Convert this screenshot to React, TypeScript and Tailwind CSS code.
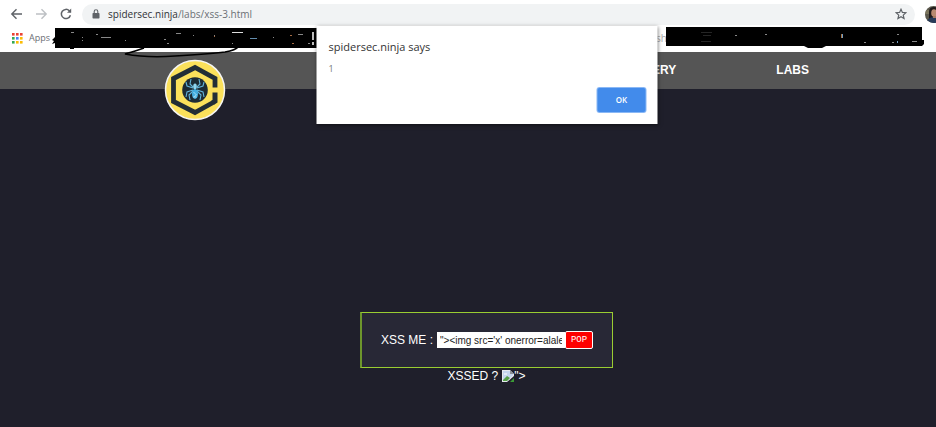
import React from "react";

function Toolbar() {
  return (
    <header className="flex h-7 items-center bg-white pl-2.5 font-['Open_Sans','Noto_Sans',sans-serif]">
      <button aria-label="Back" className="mr-3 text-[#5f6368]">
        <svg width="13" height="12" viewBox="0 0 13 12" fill="none" stroke="currentColor" strokeWidth="1.4"><path d="M12 6H2M6.5 1.2 1.8 6l4.7 4.8" /></svg>
      </button>
      <button aria-label="Forward" className="mr-3 text-[#bdc0c4]">
        <svg width="13" height="12" viewBox="0 0 13 12" fill="none" stroke="currentColor" strokeWidth="1.4"><path d="M1 6h10M6.5 1.2 11.2 6l-4.7 4.8" /></svg>
      </button>
      <button aria-label="Reload" className="mr-2.5 text-[#5f6368]">
        <svg width="12" height="12" viewBox="0 0 12 12" fill="none" stroke="currentColor" strokeWidth="1.5"><path d="M10.4 7.2A4.6 4.6 0 1 1 9.3 2.8L10.6 4" /><path d="M11.2.6v4.2H7z" fill="currentColor" stroke="none" /></svg>
      </button>
      <div className="flex h-[21px] flex-1 items-center rounded-full bg-[#f1f3f4] px-2.5">
        <svg className="mr-2 shrink-0" width="8" height="10" viewBox="0 0 8 10"><rect x=".5" y="4" width="7" height="5.5" rx=".7" fill="#5f6368" /><path d="M2.2 4V2.6a1.8 1.8 0 0 1 3.6 0V4" fill="none" stroke="#5f6368" strokeWidth="1.1" /></svg>
        <p className="flex-1 text-[10px] leading-4 text-[#6b7075]"><span className="text-[#303236]">spidersec.ninja</span>/labs/xss-3.html</p>
        <button aria-label="Bookmark this page" className="-mr-0.5 text-[#5f6368]">
          <svg width="12" height="12" viewBox="0 0 24 24" fill="none" stroke="currentColor" strokeWidth="2.4"><path d="m12 2.500 2.800 6.400 7 .6-5.300 4.700 1.600 6.800-6.100-3.600L5.900 21l1.600-6.800-5.300-4.700 7-.6z" /></svg>
        </button>
      </div>
      <button aria-label="Profile" className="ml-2.5 w-[11px] shrink-0 overflow-hidden">
        <svg width="17" height="17" viewBox="0 0 17 17">
          <clipPath id="avatar"><circle cx="8.500" cy="8.500" r="8.500" /></clipPath>
          <g clipPath="url(#avatar)">
            <path fill="#5b584c" d="M0 0h17v17H0z" />
            <path fill="#7a745c" d="M0 4h5v4H0z" />
            <path fill="#211b1a" d="M4 15V6q0-5 5-5t5 5v9z" />
            <ellipse cx="9" cy="7" rx="2.800" ry="3.800" fill="#b98a70" />
            <path fill="#293b59" d="M1 17q1-5 7-6 6 0 8 6z" />
            <path fill="#a67961" d="M8 10h3v2H8z" />
          </g>
        </svg>
      </button>
    </header>
  );
}

const appColours = ["#ea4335", "#ea4335", "#ea4335", "#34a853", "#4285f4", "#fbbc04", "#34a853", "#fbbc04", "#fbbc04"];

function Bookmarks() {
  return (
    <div className="relative z-10 flex h-6 items-start bg-white pl-3 font-['Open_Sans','Noto_Sans',sans-serif] text-[9px] leading-5 text-[#6b6e73]">
      <button className="flex h-5 w-[37px] items-center gap-1.5">
        <svg className="shrink-0" width="11" height="11" viewBox="0 0 11 11">
          {appColours.map((c, i) => <rect key={i} x={(i % 3) * 4} y={Math.floor(i / 3) * 4} width="2.600" height="2.600" fill={c} />)}
        </svg>
        <span>Apps</span>
      </button>
      <svg className="ml-0.5 shrink-0 overflow-visible" width="268" height="30" viewBox="0 0 268 30">
        <path d="M4 0h264v20H4V15l-3 1 2-3-2-1 3-3zM19 20h4v1h-4z" />
        <path d="M93 20q-8 3-19 6 22 4 50 2 34-2 50-4 11-2 13-5" fill="none" stroke="#000" strokeWidth="1.500" />
        <path d="M181 4.500h11" stroke="#ddd" />
        <path d="M262 4v8M262 14v3" stroke="#fff" strokeWidth="1.500" />
        <path d="M20 4.500h3M45 6.500h2M50 9.500h10M31 9.500h1M31 12.500h1M74 12.500h1M125 5.500h5M113 11.500h2M116 15.500h2M142 7.500h1M163 7.500h1M181 15.500h1M222 9.500h1M247 6.500h5M257 15.500h2" stroke="#888" />
        <path d="M199 10.500h7" stroke="#628cad" />
        <path d="M163 8.500h1M239 7.500h2M241 15.500h2" stroke="#a66c43" />
      </svg>
      <span className="ml-auto text-[10px] text-[#aaa]">sh</span>
      <svg className="-ml-px -mt-px mr-3 shrink-0 overflow-visible" width="258" height="22" viewBox="0 0 258 22">
        <path d="M0 0h256v13h2v4l-2 2H160l-4 2h-14l-4-2H0z" />
        <path d="M35 5.500h11M37 8.500h8M35 14.500h10" stroke="#252525" />
        <path d="M69 8.500h2M99 7.500h2M198 15.500h2M226 15.500h2M246 14.500h5M231 7.500h2" stroke="#888" />
        <path d="M175.500 7v4" stroke="#a67649" /><path d="M176.500 7v4M231.500 14v2" stroke="#719cc2" />
      </svg>
    </div>
  );
}

function Logo() {
  return (
    <svg className="relative z-10 shrink-0" width="62" height="62" viewBox="0 0 62 62" role="img" aria-label="SpiderSec">
      <circle cx="31" cy="31" r="29.500" fill="#fbe15b" stroke="#f5f5f2" strokeWidth="1.500" />
      <path d="M51 28.500V19.500L31 8.500 9.500 19.500v23L31 53.500l19-10.500" fill="none" stroke="#222e36" strokeWidth="4.800" />
      <path d="M48.500 33.500h5V43.500l-3 2-3.500-3.500 1.500-1z" fill="#222e36" />
      <circle cx="31" cy="31" r="12.800" fill="#1d2b35" />
      <g fill="none" stroke="#63b5db" strokeWidth="1.100">
        <path d="M29 28l-3-3 1-5M33 28l3-3-1-5M29 29l-6-2-1-4M33 29l6-2 1-4M29 31l-6 2-1 5M33 31l6 2 1 5M29 32l-4 4 1 5M33 32l4 4-1 5" />
      </g>
      <ellipse cx="31" cy="27.500" rx="1.800" ry="3" fill="#8ed4ef" />
      <ellipse cx="31" cy="35" rx="3" ry="5" fill="#43aee1" />
      <path d="m29.500 33 3 3-3 2h3" fill="none" stroke="#b8e6f7" strokeWidth=".8" />
    </svg>
  );
}

function Dialog() {
  return (
    <section role="dialog" aria-label="spidersec.ninja says" className="absolute left-[calc(50%+19px)] top-[26px] z-20 flex w-[341px] -translate-x-1/2 flex-col bg-white p-3 pt-[11px] font-['Open_Sans','Noto_Sans',sans-serif] shadow-[0_1px_4px_#0008]">
      <h1 className="text-[11px] leading-5 text-[#333]">spidersec.ninja says</h1>
      <p className="mt-1 text-[9px] leading-4 text-[#777]">1</p>
      <button className="mt-[11px] h-6 w-12 self-end rounded-[2px] bg-[#428beb] text-[8px] font-semibold text-white ring-1 ring-[#8ab8f5]">OK</button>
    </section>
  );
}

function BrokenImage() {
  return (
    <svg className="inline-block" width="12" height="12" viewBox="0 0 12 12" role="img" aria-label="Broken image">
      <path d="M0 0h8l4 4v2L5 12H0z" fill="#e5e9ed" />
      <path d="M1 1h7v3h3v1L5 11H1z" fill="#c4d5ed" />
      <path d="m1 10 4-4 3 2-3 3H1z" fill="#55a047" />
      <path d="M8 0v4h4z" fill="#8b9096" />
      <path d="M2 3.500h3v1H2z" fill="#fff" />
      <path d="m8 12 4-4v4z" fill="#3b9a36" />
    </svg>
  );
}

export default function App() {
  return (
    <div className="relative min-h-screen overflow-hidden bg-[#1f1f2b] font-['Liberation_Sans',Arial,sans-serif]">
      <Toolbar />
      <Bookmarks />
      <Dialog />
      <div className="w-[calc(100%+37px)]">
        <nav className="flex h-[37px] items-start bg-[#555] px-[164px] pt-[7px] text-xs font-bold leading-[22px] text-white">
          <Logo />
          <a href="#gallery" className="ml-auto">ERY</a>
          <a href="#labs" className="ml-[100px]">LABS</a>
        </nav>
        <main className="flex flex-col items-center pt-[223px] text-xs text-white">
          <form className="flex h-14 w-[253px] items-center justify-center border border-l-2 border-[#9acd32] border-l-[#6d962c] bg-[#282836]" onSubmit={(e) => e.preventDefault()}>
            <label htmlFor="payload" className="mr-1">XSS ME :</label>
            <input id="payload" defaultValue={`"><img src='x' onerror=alalert(1)`} className="h-4 w-32 bg-white px-[3px] text-[10px] text-[#222] outline-none" />
            <button className="h-[18px] w-7 rounded-[2px] border border-white bg-[#f00] font-['Liberation_Mono',monospace] text-[9px] leading-4 text-white">POP</button>
          </form>
          <p className="flex h-4 items-center"><span className="mr-1">XSSED ?</span><BrokenImage /><span>"&gt;</span></p>
        </main>
      </div>
    </div>
  );
}
